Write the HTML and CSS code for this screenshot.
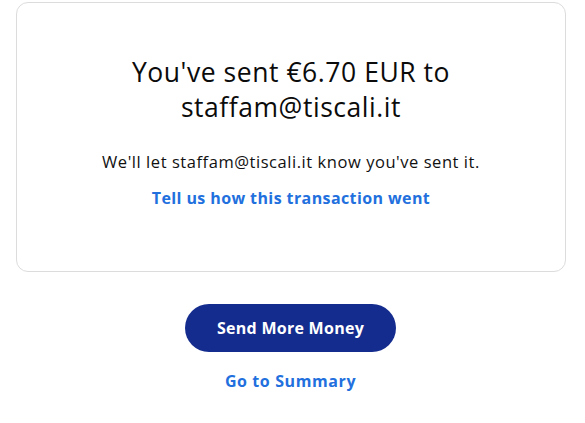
FILE: index.html
```html
<!DOCTYPE html>
<html lang="en">
<head>
<meta charset="utf-8">
<link rel="stylesheet" href="styles.css">
</head>
<body>
<main class="page">
  <section class="card">
    <h1 class="title">You've sent €6.70 EUR to<br>staffam@tiscali.it</h1>
    <p class="note">We'll let staffam@tiscali.it know you've sent it.</p>
    <a class="link feedback" href="#">Tell us how this transaction went</a>
  </section>
  <div class="actions">
    <a class="btn-primary" href="#">Send More Money</a>
    <a class="link summary" href="#">Go to Summary</a>
  </div>
</main>
</body>
</html>
```
FILE: styles.css
```css
* { box-sizing: border-box; }
html, body { margin: 0; padding: 0; background: #fff; }
body {
  font-family: "Open Sans", Lato, sans-serif;
  color: #000;
  width: 585px;
}
.page {
  padding: 2px 19px 0 16px;
  display: flex;
  flex-direction: column;
}
.card {
  border: 1px solid #dcdcdc;
  border-radius: 12px;
  height: 270px;
  display: flex;
  flex-direction: column;
  align-items: center;
  padding-top: 52px;
}
.title {
  margin: 0;
  font-size: 26.5px;
  font-weight: 400;
  letter-spacing: 0.55px;
  line-height: 35px;
  text-align: center;
  color: #0b0b0b;
}
.note {
  margin: 25px 0 0;
  font-size: 16.5px;
  letter-spacing: 0.55px;
  line-height: 24px;
  color: #111;
}
.link {
  color: #2270de;
  font-weight: 700;
  font-size: 16px;
  letter-spacing: 0.4px;
  text-decoration: none;
  line-height: 24px;
}
.feedback { margin-top: 12px; }
.summary { letter-spacing: 0.6px; }
.actions {
  display: flex;
  flex-direction: column;
  align-items: center;
  margin-top: 32px;
  padding-right: 1px;
  gap: 17px;
}
.btn-primary {
  width: 211px;
  height: 48px;
  border-radius: 24px;
  background: #142c8e;
  color: #fff;
  font-weight: 700;
  font-size: 16px;
  letter-spacing: 0.27px;
  display: flex;
  align-items: center;
  justify-content: center;
  text-decoration: none;
}
```
